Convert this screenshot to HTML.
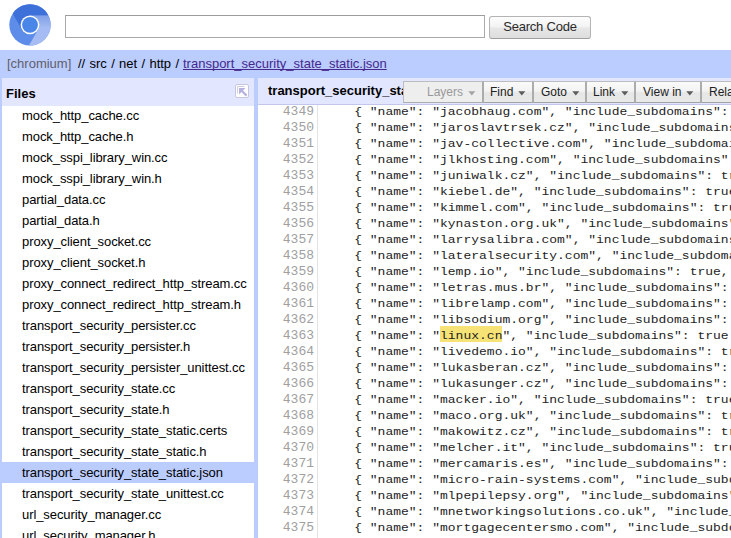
<!DOCTYPE html>
<html><head><meta charset="utf-8">
<style>
*{box-sizing:border-box}
html,body{margin:0;padding:0}
body{width:731px;height:538px;overflow:hidden;position:relative;background:#fff;font-family:"Liberation Sans",sans-serif;font-size:13px;color:#000}
.abs{position:absolute}
#logo{left:0;top:0;width:60px;height:50px}
#q{left:65px;top:15px;width:420px;height:23px;border:1px solid #a9a9a9;border-top-color:#9c9c9c;background:#fff}
#sb{left:489px;top:16px;width:102px;height:23px;border:1px solid #b4b4b4;border-bottom-color:#9f9f9f;border-radius:3px;background:linear-gradient(#fdfdfd,#f3f3f3 45%,#e6e6e6 55%,#dedede);color:#2a2a2a;text-align:center;line-height:20px;font-size:13px;letter-spacing:-0.2px}
#blue{left:0;top:50px;width:731px;height:488px;background:#bbccff}
#crumb{left:7px;top:56px;height:16px;line-height:16px;white-space:nowrap;color:#000}
#crumb span,#crumb a{position:absolute;top:0}
#crumb .g{color:#5f5f6a}
#crumb a{color:#46298c;text-decoration:underline;text-decoration-skip-ink:none}
#lp{left:2px;top:78px;width:252px;height:470px;background:#fff;overflow:hidden}
#lph{left:0;top:0;width:252px;height:28px;background:#e2e7ff;z-index:2}
#lph b{position:absolute;left:4px;top:8px;font-size:13px;line-height:16px}
#coll{left:233px;top:6px;width:14px;height:14px;}
.fl{position:absolute;left:0;width:252px;height:21px;line-height:21px;padding-left:20px;white-space:nowrap;letter-spacing:-0.08px}
.fl.sel{background:#bbccff}
#rp{left:258px;top:78px;width:473px;height:470px;background:#fff;overflow:hidden}
#rph{left:0;top:0;width:473px;height:27px;background:#e2e7ff;border-bottom:1px solid #c2c6ea}
#rph b{position:absolute;left:10px;top:5px;font-size:13px;line-height:16px;white-space:nowrap}
#tb{left:145px;top:3px;width:340px;height:23px;white-space:nowrap;background:#e2e7ff}
.bt{position:absolute;top:0;height:22px;border:1px solid #acacac;border-top-color:#bdbdbd;border-bottom-color:#a2a2a2;background:linear-gradient(#fafafa,#f3f3f3 45%,#e6e6e6 55%,#e9e9e9);color:#222;overflow:hidden;font-size:12px}
.bt span{position:absolute;top:3px;line-height:14px;white-space:nowrap}
.bt .ar{position:absolute;top:9px;fill:#5c5c5c}
.bt.dis{color:#999;background:#eeeeee;border-color:#bcbcbc;border-right-color:#acacac;border-bottom-color:#acacac}
.bt.dis .ar{fill:#a4a4a4}
#gut{left:0;top:27px;width:60px;height:450px;border-right:1px solid #e4e4e4}
.ln{position:absolute;left:0;width:56px;text-align:right;font-family:"Liberation Mono",monospace;font-size:13px;line-height:16px;height:16px;color:#a0a0a0;transform:translateY(-1.3px) scaleY(0.93);transform-origin:0 11px}
.cl{position:absolute;left:65px;font-family:"Liberation Mono",monospace;font-size:13px;line-height:16px;height:16px;white-space:pre;color:#222;transform:translateY(-0.7px) scaleY(0.86);transform-origin:0 11px}
.hl{background:#f7e375}
</style></head><body>
<svg id="logo" class="abs" width="60" height="50" viewBox="0 0 60 50">
<defs><clipPath id="cc"><circle cx="30" cy="24.85" r="20.7"/></clipPath>
<linearGradient id="rg" x1="0" y1="0" x2="0" y2="1"><stop offset="0" stop-color="#7f9fe6"/><stop offset="0.25" stop-color="#a4bbf3"/><stop offset="1" stop-color="#a9bff5"/></linearGradient></defs>
<g clip-path="url(#cc)">
<rect x="0" y="0" width="60" height="50" fill="#5d8de8"/>
<polygon points="21.86,29.55 1.86,-5.09 80,-5.09 80,15.45 30,15.45" fill="#3e70d9"/>
<polygon points="30,15.45 80,15.45 80,64.2 18.1,64.2 38.14,29.55" fill="url(#rg)"/>
</g>
<circle cx="30" cy="24.85" r="9.4" fill="#fff"/>
<circle cx="30" cy="24.85" r="7.9" fill="#4a86e8"/>
</svg>
<div id="q" class="abs"></div>
<div id="sb" class="abs">Search Code</div>
<div id="blue" class="abs"></div>
<div id="crumb" class="abs"><span class="g" style="left:0">[chromium]</span><span style="left:71px;word-spacing:0.7px">// src / net / http /</span><a style="left:176px">transport_security_state_static.json</a></div>
<div id="lp" class="abs">
 <div id="lph" class="abs"><b>Files</b>
  <div id="coll" class="abs"><svg width="14" height="14" viewBox="0 0 14 14"><rect x="0.5" y="0.5" width="13" height="13" rx="1.5" fill="#fff" stroke="#c6c6de"/><path d="M2.5 9.5 V2.5 H9.5" stroke="#cfcfe4" stroke-width="1" fill="none"/><polygon points="4,4 10.5,4 4,10.5" fill="#b5b2e2"/><line x1="6.5" y1="6.5" x2="11.6" y2="11.6" stroke="#b5b2e2" stroke-width="2.2"/></svg></div>
 </div>
 <div class="fl" style="top:27px">mock_http_cache.cc</div>
 <div class="fl" style="top:48px">mock_http_cache.h</div>
 <div class="fl" style="top:69px">mock_sspi_library_win.cc</div>
 <div class="fl" style="top:90px">mock_sspi_library_win.h</div>
 <div class="fl" style="top:111px">partial_data.cc</div>
 <div class="fl" style="top:132px">partial_data.h</div>
 <div class="fl" style="top:153px">proxy_client_socket.cc</div>
 <div class="fl" style="top:174px">proxy_client_socket.h</div>
 <div class="fl" style="top:195px">proxy_connect_redirect_http_stream.cc</div>
 <div class="fl" style="top:216px">proxy_connect_redirect_http_stream.h</div>
 <div class="fl" style="top:237px">transport_security_persister.cc</div>
 <div class="fl" style="top:258px">transport_security_persister.h</div>
 <div class="fl" style="top:279px">transport_security_persister_unittest.cc</div>
 <div class="fl" style="top:300px">transport_security_state.cc</div>
 <div class="fl" style="top:321px">transport_security_state.h</div>
 <div class="fl" style="top:342px">transport_security_state_static.certs</div>
 <div class="fl" style="top:363px">transport_security_state_static.h</div>
 <div class="fl sel" style="top:384px">transport_security_state_static.json</div>
 <div class="fl" style="top:405px">transport_security_state_unittest.cc</div>
 <div class="fl" style="top:426px">url_security_manager.cc</div>
 <div class="fl" style="top:447px">url_security_manager.h</div>
</div>
<div id="rp" class="abs">
 <div id="rph" class="abs"><b>transport_security_state_static.json</b>
  <div id="tb" class="abs">
   <div class="bt dis" style="left:0px;width:80px"><span style="left:23px">Layers</span><svg class="ar" style="left:64px" width="8" height="5" viewBox="0 0 8 5"><polygon points="0.3,0.2 7.3,0.2 3.8,4.4"/></svg></div>
   <div class="bt" style="left:80px;width:50px"><span style="left:6px">Find</span><svg class="ar" style="left:34px" width="8" height="5" viewBox="0 0 8 5"><polygon points="0.3,0.2 7.3,0.2 3.8,4.4"/></svg></div>
   <div class="bt" style="left:130px;width:53px"><span style="left:7px">Goto</span><svg class="ar" style="left:38px" width="8" height="5" viewBox="0 0 8 5"><polygon points="0.3,0.2 7.3,0.2 3.8,4.4"/></svg></div>
   <div class="bt" style="left:183px;width:49px"><span style="left:6px">Link</span><svg class="ar" style="left:34px" width="8" height="5" viewBox="0 0 8 5"><polygon points="0.3,0.2 7.3,0.2 3.8,4.4"/></svg></div>
   <div class="bt" style="left:232px;width:66px"><span style="left:7px">View in</span><svg class="ar" style="left:50px" width="8" height="5" viewBox="0 0 8 5"><polygon points="0.3,0.2 7.3,0.2 3.8,4.4"/></svg></div>
   <div class="bt" style="left:298px;width:70px"><span style="left:7px">Related</span><svg class="ar" style="left:56px" width="8" height="5" viewBox="0 0 8 5"><polygon points="0.3,0.2 7.3,0.2 3.8,4.4"/></svg></div>
  </div>
 </div>
 <div id="gut" class="abs"></div>
 <div id="code" class="abs" style="left:0;top:27px;width:473px;height:450px">
 <div class="hl" style="position:absolute;left:182px;top:221px;width:62px;height:16px"></div>
 <div class="ln" style="top:0px">4349</div><div class="cl" style="top:0px">    { "name": "jacobhaug.com", "include_subdomains": true, "mode": "force" },</div>
 <div class="ln" style="top:16px">4350</div><div class="cl" style="top:16px">    { "name": "jaroslavtrsek.cz", "include_subdomains": true, "mode": "force" },</div>
 <div class="ln" style="top:32px">4351</div><div class="cl" style="top:32px">    { "name": "jav-collective.com", "include_subdomains": true, "mode": "force" },</div>
 <div class="ln" style="top:48px">4352</div><div class="cl" style="top:48px">    { "name": "jlkhosting.com", "include_subdomains": true, "mode": "force" },</div>
 <div class="ln" style="top:64px">4353</div><div class="cl" style="top:64px">    { "name": "juniwalk.cz", "include_subdomains": true, "mode": "force" },</div>
 <div class="ln" style="top:80px">4354</div><div class="cl" style="top:80px">    { "name": "kiebel.de", "include_subdomains": true, "mode": "force" },</div>
 <div class="ln" style="top:96px">4355</div><div class="cl" style="top:96px">    { "name": "kimmel.com", "include_subdomains": true, "mode": "force" },</div>
 <div class="ln" style="top:112px">4356</div><div class="cl" style="top:112px">    { "name": "kynaston.org.uk", "include_subdomains": true, "mode": "force" },</div>
 <div class="ln" style="top:128px">4357</div><div class="cl" style="top:128px">    { "name": "larrysalibra.com", "include_subdomains": true, "mode": "force" },</div>
 <div class="ln" style="top:144px">4358</div><div class="cl" style="top:144px">    { "name": "lateralsecurity.com", "include_subdomains": true, "mode": "force" },</div>
 <div class="ln" style="top:160px">4359</div><div class="cl" style="top:160px">    { "name": "lemp.io", "include_subdomains": true, "mode": "force" },</div>
 <div class="ln" style="top:176px">4360</div><div class="cl" style="top:176px">    { "name": "letras.mus.br", "include_subdomains": true, "mode": "force" },</div>
 <div class="ln" style="top:192px">4361</div><div class="cl" style="top:192px">    { "name": "librelamp.com", "include_subdomains": true, "mode": "force" },</div>
 <div class="ln" style="top:208px">4362</div><div class="cl" style="top:208px">    { "name": "libsodium.org", "include_subdomains": true, "mode": "force" },</div>
 <div class="ln" style="top:224px">4363</div><div class="cl" style="top:224px">    { "name": "linux.cn", "include_subdomains": true  "mode": "force" },</div>
 <div class="ln" style="top:240px">4364</div><div class="cl" style="top:240px">    { "name": "livedemo.io", "include_subdomains": true, "mode": "force" },</div>
 <div class="ln" style="top:256px">4365</div><div class="cl" style="top:256px">    { "name": "lukasberan.cz", "include_subdomains": true, "mode": "force" },</div>
 <div class="ln" style="top:272px">4366</div><div class="cl" style="top:272px">    { "name": "lukasunger.cz", "include_subdomains": true, "mode": "force" },</div>
 <div class="ln" style="top:288px">4367</div><div class="cl" style="top:288px">    { "name": "macker.io", "include_subdomains": true, "mode": "force" },</div>
 <div class="ln" style="top:304px">4368</div><div class="cl" style="top:304px">    { "name": "maco.org.uk", "include_subdomains": true, "mode": "force" },</div>
 <div class="ln" style="top:320px">4369</div><div class="cl" style="top:320px">    { "name": "makowitz.cz", "include_subdomains": true, "mode": "force" },</div>
 <div class="ln" style="top:336px">4370</div><div class="cl" style="top:336px">    { "name": "melcher.it", "include_subdomains": true, "mode": "force" },</div>
 <div class="ln" style="top:352px">4371</div><div class="cl" style="top:352px">    { "name": "mercamaris.es", "include_subdomains": true, "mode": "force" },</div>
 <div class="ln" style="top:368px">4372</div><div class="cl" style="top:368px">    { "name": "micro-rain-systems.com", "include_subdomains": true, "mode": "force" },</div>
 <div class="ln" style="top:384px">4373</div><div class="cl" style="top:384px">    { "name": "mlpepilepsy.org", "include_subdomains": true, "mode": "force" },</div>
 <div class="ln" style="top:400px">4374</div><div class="cl" style="top:400px">    { "name": "mnetworkingsolutions.co.uk", "include_subdomains": true, "mode": "force" },</div>
 <div class="ln" style="top:416px">4375</div><div class="cl" style="top:416px">    { "name": "mortgagecentersmo.com", "include_subdomains": true, "mode": "force" },</div>
 </div>
</div>
</body></html>
